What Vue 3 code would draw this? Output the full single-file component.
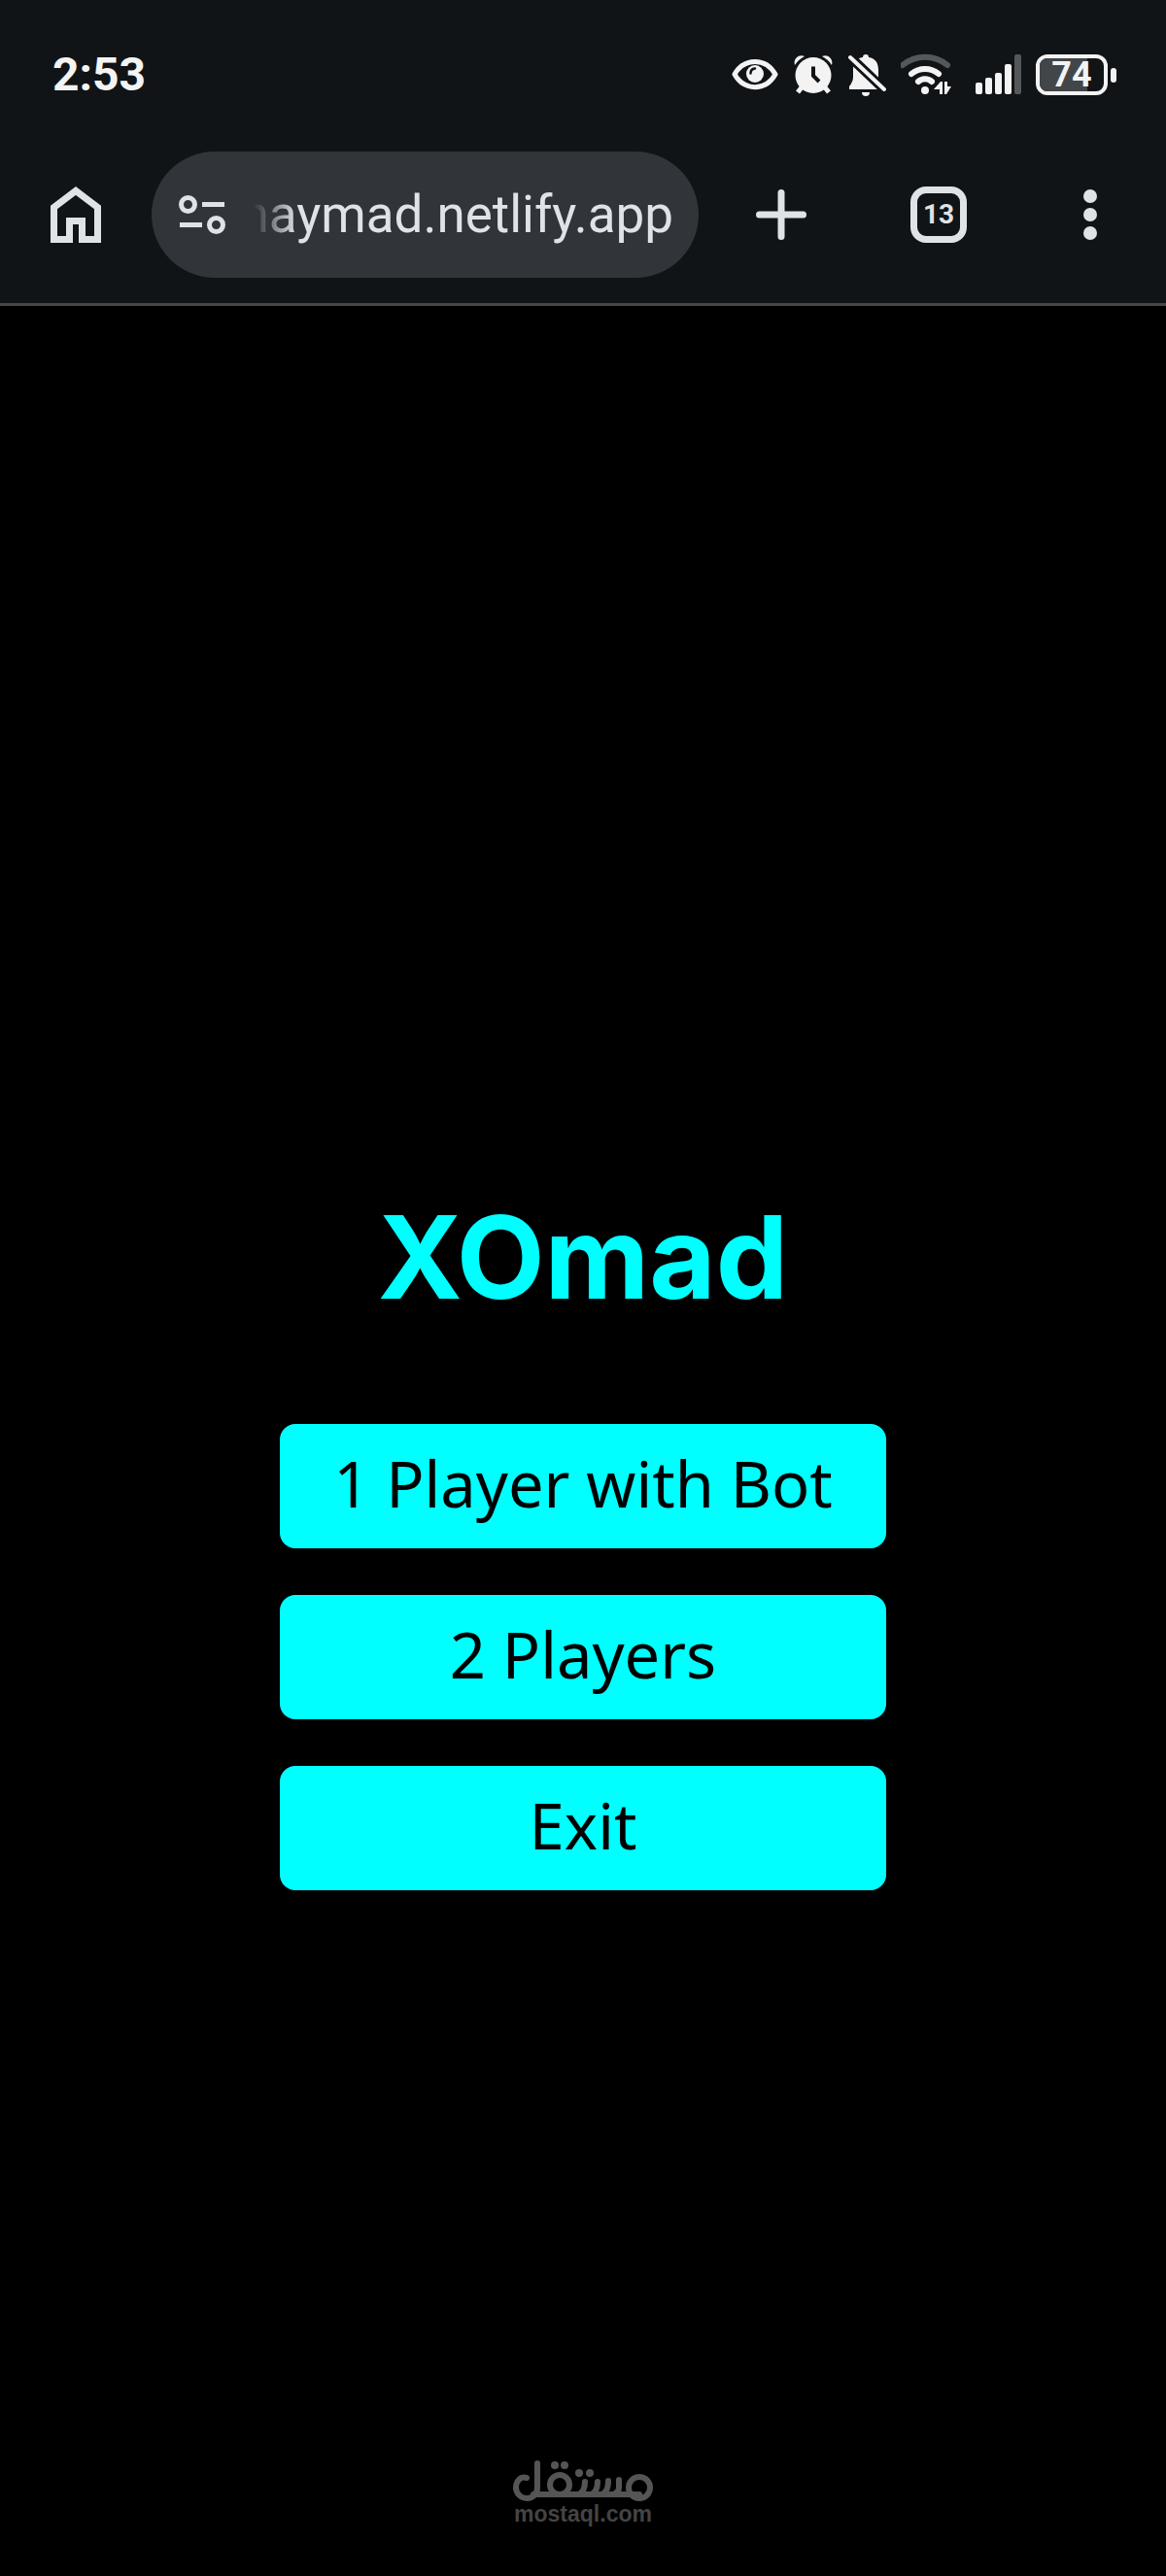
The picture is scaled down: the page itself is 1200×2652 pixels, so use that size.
<script setup>
const charge = 74
const tabCount = 13
const address = 'naymad.netlify.app'
const choices = ['1 Player with Bot', '2 Players', 'Exit']
</script>

<template>
  <div class="screen">
    <header class="chrome">
      <div class="status">
        <time class="clock">2:53</time>
        <div class="indicators">
          <svg width="50" height="44" viewBox="0 0 50 44" fill="none" stroke="#f3f3f3" aria-label="Reading mode">
            <path d="M4 21.500C14 4 36 4 46 21.500C36 39 14 39 4 21.500Z" stroke-width="5" stroke-linejoin="round" />
            <circle cx="25" cy="21" r="9" fill="#f3f3f3" stroke="none" />
            <path d="M20.500 20.500q0-4.500 4.500-5" stroke="#101417" stroke-width="2.500" stroke-linecap="round" />
          </svg>
          <svg width="40" height="44" viewBox="0 0 40 44" fill="#f3f3f3" aria-label="Alarm">
            <path d="M1 12C-1 6 5 0 11 3Q5 6 1 12ZM39 12C41 6 35 0 29 3Q35 6 39 12Z" />
            <path d="M8 35L4 40M32 35L36 40" stroke="#f3f3f3" stroke-width="5" />
            <circle cx="20" cy="22.500" r="18.500" />
            <path d="M20 13.500V23L26 29" fill="none" stroke="#101417" stroke-width="4" />
          </svg>
          <svg width="40" height="44" viewBox="0 0 40 44" fill="#f3f3f3" aria-label="Muted">
            <path d="M19 1c2 0 3 1 3 3C29 5 32 10 32 17V27L37 34V37H2V34Q6 29 6 24V17C6 10 9 5 16 4C16 2 17 1 19 1Z" />
            <path d="M15 40H23Q23 44 19 44Q15 44 15 40Z" />
            <path d="M-3 -2L41 40" stroke="#101417" stroke-width="10" />
            <path d="M3 4L38 37" stroke="#f3f3f3" stroke-width="4" stroke-linecap="round" />
          </svg>
          <svg width="62" height="44" viewBox="0 0 62 44" fill="none" stroke="#f3f3f3" stroke-width="6" stroke-linecap="round" aria-label="Wi-Fi">
            <path d="M2 12A36 36 0 0 1 48 12" stroke="#55585a" />
            <path d="M11 21A22 22 0 0 1 39 21" />
            <path d="M18 29A10 10 0 0 1 32 29" />
            <circle cx="25" cy="38" r="4" fill="#f3f3f3" stroke="none" />
            <path d="M34 37L41 29H43V42H40V37ZM45 29H48V34H52L47 42H45Z" fill="#f3f3f3" stroke="none" />
          </svg>
          <svg width="47" height="44" viewBox="0 0 47 44" fill="#f3f3f3" aria-label="Signal">
            <rect x="0" y="30" width="7" height="12" rx="2" />
            <rect x="10" y="25" width="7" height="17" rx="2" />
            <rect x="20" y="20" width="7" height="22" rx="2" />
            <rect x="30" y="11" width="7" height="31" rx="2" />
            <rect x="40" y="1" width="7" height="41" rx="2" fill="#55585a" />
          </svg>
          <div class="battery">
            <div class="cell">
              <div class="level" :style="{ width: charge + '%' }"></div>
              <span class="percent">{{ charge }}</span>
            </div>
            <div class="cap"></div>
          </div>
        </div>
      </div>

      <nav class="toolbar">
        <button class="tool" aria-label="Home">
          <svg width="52" height="58" viewBox="0 0 52 58" fill="none" stroke="#dfe2e7" stroke-width="7">
            <path d="M3.500 54.500V21.500L26 4.500L48.500 21.500V54.500H32.500V35.500H19.500V54.500Z" />
          </svg>
        </button>
        <div class="omnibox">
          <svg width="50" height="40" viewBox="0 0 50 40" fill="none" stroke="#dfe2e7" stroke-width="5">
            <circle cx="9.500" cy="9.500" r="7" />
            <path d="M24 9.500H47M1 30.500H24" />
            <circle cx="38.500" cy="30.500" r="7" />
          </svg>
          <div class="address"><span>{{ address }}</span></div>
        </div>
        <button class="tool new-tab" aria-label="New tab">
          <svg width="52" height="52" viewBox="0 0 52 52" stroke="#dfe2e7" stroke-width="7" stroke-linecap="round">
            <path d="M26 3.500V48.500M3.500 26H48.500" />
          </svg>
        </button>
        <button class="tool" aria-label="Tabs"><span class="tabs">{{ tabCount }}</span></button>
        <button class="tool" aria-label="Menu">
          <svg width="14" height="52" viewBox="0 0 14 52" fill="#dfe2e7">
            <circle cx="7" cy="7" r="7" />
            <circle cx="7" cy="26" r="7" />
            <circle cx="7" cy="45" r="7" />
          </svg>
        </button>
      </nav>
    </header>

    <main class="game">
      <h1>XOmad</h1>
      <div class="choices">
        <button v-for="choice in choices" :key="choice" class="choice">{{ choice }}</button>
      </div>
    </main>

    <footer class="brand">
      <svg width="144" height="43" viewBox="0 0 144 43" fill="none" stroke="#555" stroke-width="6" stroke-linecap="round" aria-label="مستقل">
        <path d="M14 18C7 16 3 22 3 28C3 34 8 39 14 39C21 39 25 34 25 28V3" />
        <path d="M21 35H130" />
        <circle cx="48" cy="25" r="10" />
        <circle cx="130" cy="28" r="11" />
        <path d="M74 22Q74 31 69 34M87 22Q87 31 82 34M98 21Q98 31 93 34M109 20V28Q109 32 105 34" />
        <g fill="#555" stroke="none">
          <circle cx="43" cy="5" r="4" />
          <circle cx="53" cy="5" r="4" />
          <circle cx="68" cy="13" r="4" />
          <circle cx="79" cy="13" r="4" />
        </g>
      </svg>
      <span>mostaql.com</span>
    </footer>
  </div>
</template>

<style>
body {
  margin: 0;
  background: #000;
}
</style>

<style scoped>
.screen {
  min-height: 100vh;
  display: flex;
  flex-direction: column;
  background: #000;
  font-family: Roboto, "Liberation Sans", sans-serif;
}

button {
  padding: 0;
  border: 0;
  font-family: inherit;
}

svg {
  display: block;
  flex: none;
}

.chrome {
  background: #101417;
  border-bottom: 3px solid #44484b;
}

.status {
  display: flex;
  justify-content: space-between;
  align-items: center;
  height: 156px;
  padding: 0 51px 2px 54px;
  box-sizing: border-box;
}

.clock {
  font-size: 48px;
  line-height: 56px;
  font-weight: 700;
  color: #f3f3f3;
}

.indicators {
  display: flex;
  align-items: center;
  gap: 15px;
}

.battery {
  display: flex;
  align-items: center;
  gap: 3px;
}

.cell {
  position: relative;
  width: 74px;
  height: 42px;
  box-sizing: border-box;
  border: 4px solid #f3f3f3;
  border-radius: 12px;
}

.level {
  height: 100%;
  border-radius: 8px 0 0 8px;
  background: #434648;
}

.percent {
  position: absolute;
  inset: 0;
  font-size: 36px;
  line-height: 34px;
  font-weight: 700;
  text-align: center;
  color: #f3f3f3;
}

.cap {
  width: 6px;
  height: 15px;
  border-radius: 3px;
  background: #f3f3f3;
}

.toolbar {
  display: flex;
  align-items: center;
  padding-bottom: 26px;
}

.tool {
  display: flex;
  justify-content: center;
  align-items: center;
  width: 156px;
  height: 130px;
  background: transparent;
}

.new-tab {
  width: 169px;
}

.omnibox {
  flex: 1;
  min-width: 0;
  display: flex;
  align-items: center;
  gap: 27px;
  height: 130px;
  padding: 0 26px 0 28px;
  box-sizing: border-box;
  border-radius: 65px;
  background: #313438;
}

.address {
  flex: 1;
  min-width: 0;
  display: flex;
  justify-content: flex-end;
  overflow: hidden;
  font-size: 53px;
  line-height: 64px;
  white-space: nowrap;
  color: #dfe2e7;
  mask-image: linear-gradient(to right, transparent, #000 44px);
}

.tabs {
  width: 58px;
  height: 58px;
  box-sizing: border-box;
  border: 7px solid #dfe2e7;
  border-radius: 16px;
  font-size: 28px;
  line-height: 44px;
  font-weight: 700;
  color: #dfe2e7;
}

.game {
  flex: 1;
  display: flex;
  flex-direction: column;
  justify-content: center;
  align-items: center;
  gap: 98px;
  padding-top: 12vh;
}

h1 {
  margin: 0;
  font-family: Inter, sans-serif;
  font-size: 118px;
  line-height: 148px;
  font-weight: 700;
  color: #0ff;
}

.choices {
  display: flex;
  flex-direction: column;
  gap: 48px;
  width: 52%;
}

.choice {
  height: 128px;
  padding-bottom: 6px;
  border-radius: 16px;
  background: #0ff;
  font-family: "Noto Sans", sans-serif;
  font-size: 65px;
  line-height: 88px;
  color: #000;
}

.brand {
  display: flex;
  flex-direction: column;
  align-items: center;
  padding-bottom: 52px;
  font-family: "Liberation Sans", Arial, sans-serif;
  font-size: 23px;
  line-height: 24px;
  font-weight: 700;
  color: #444;
}
</style>
